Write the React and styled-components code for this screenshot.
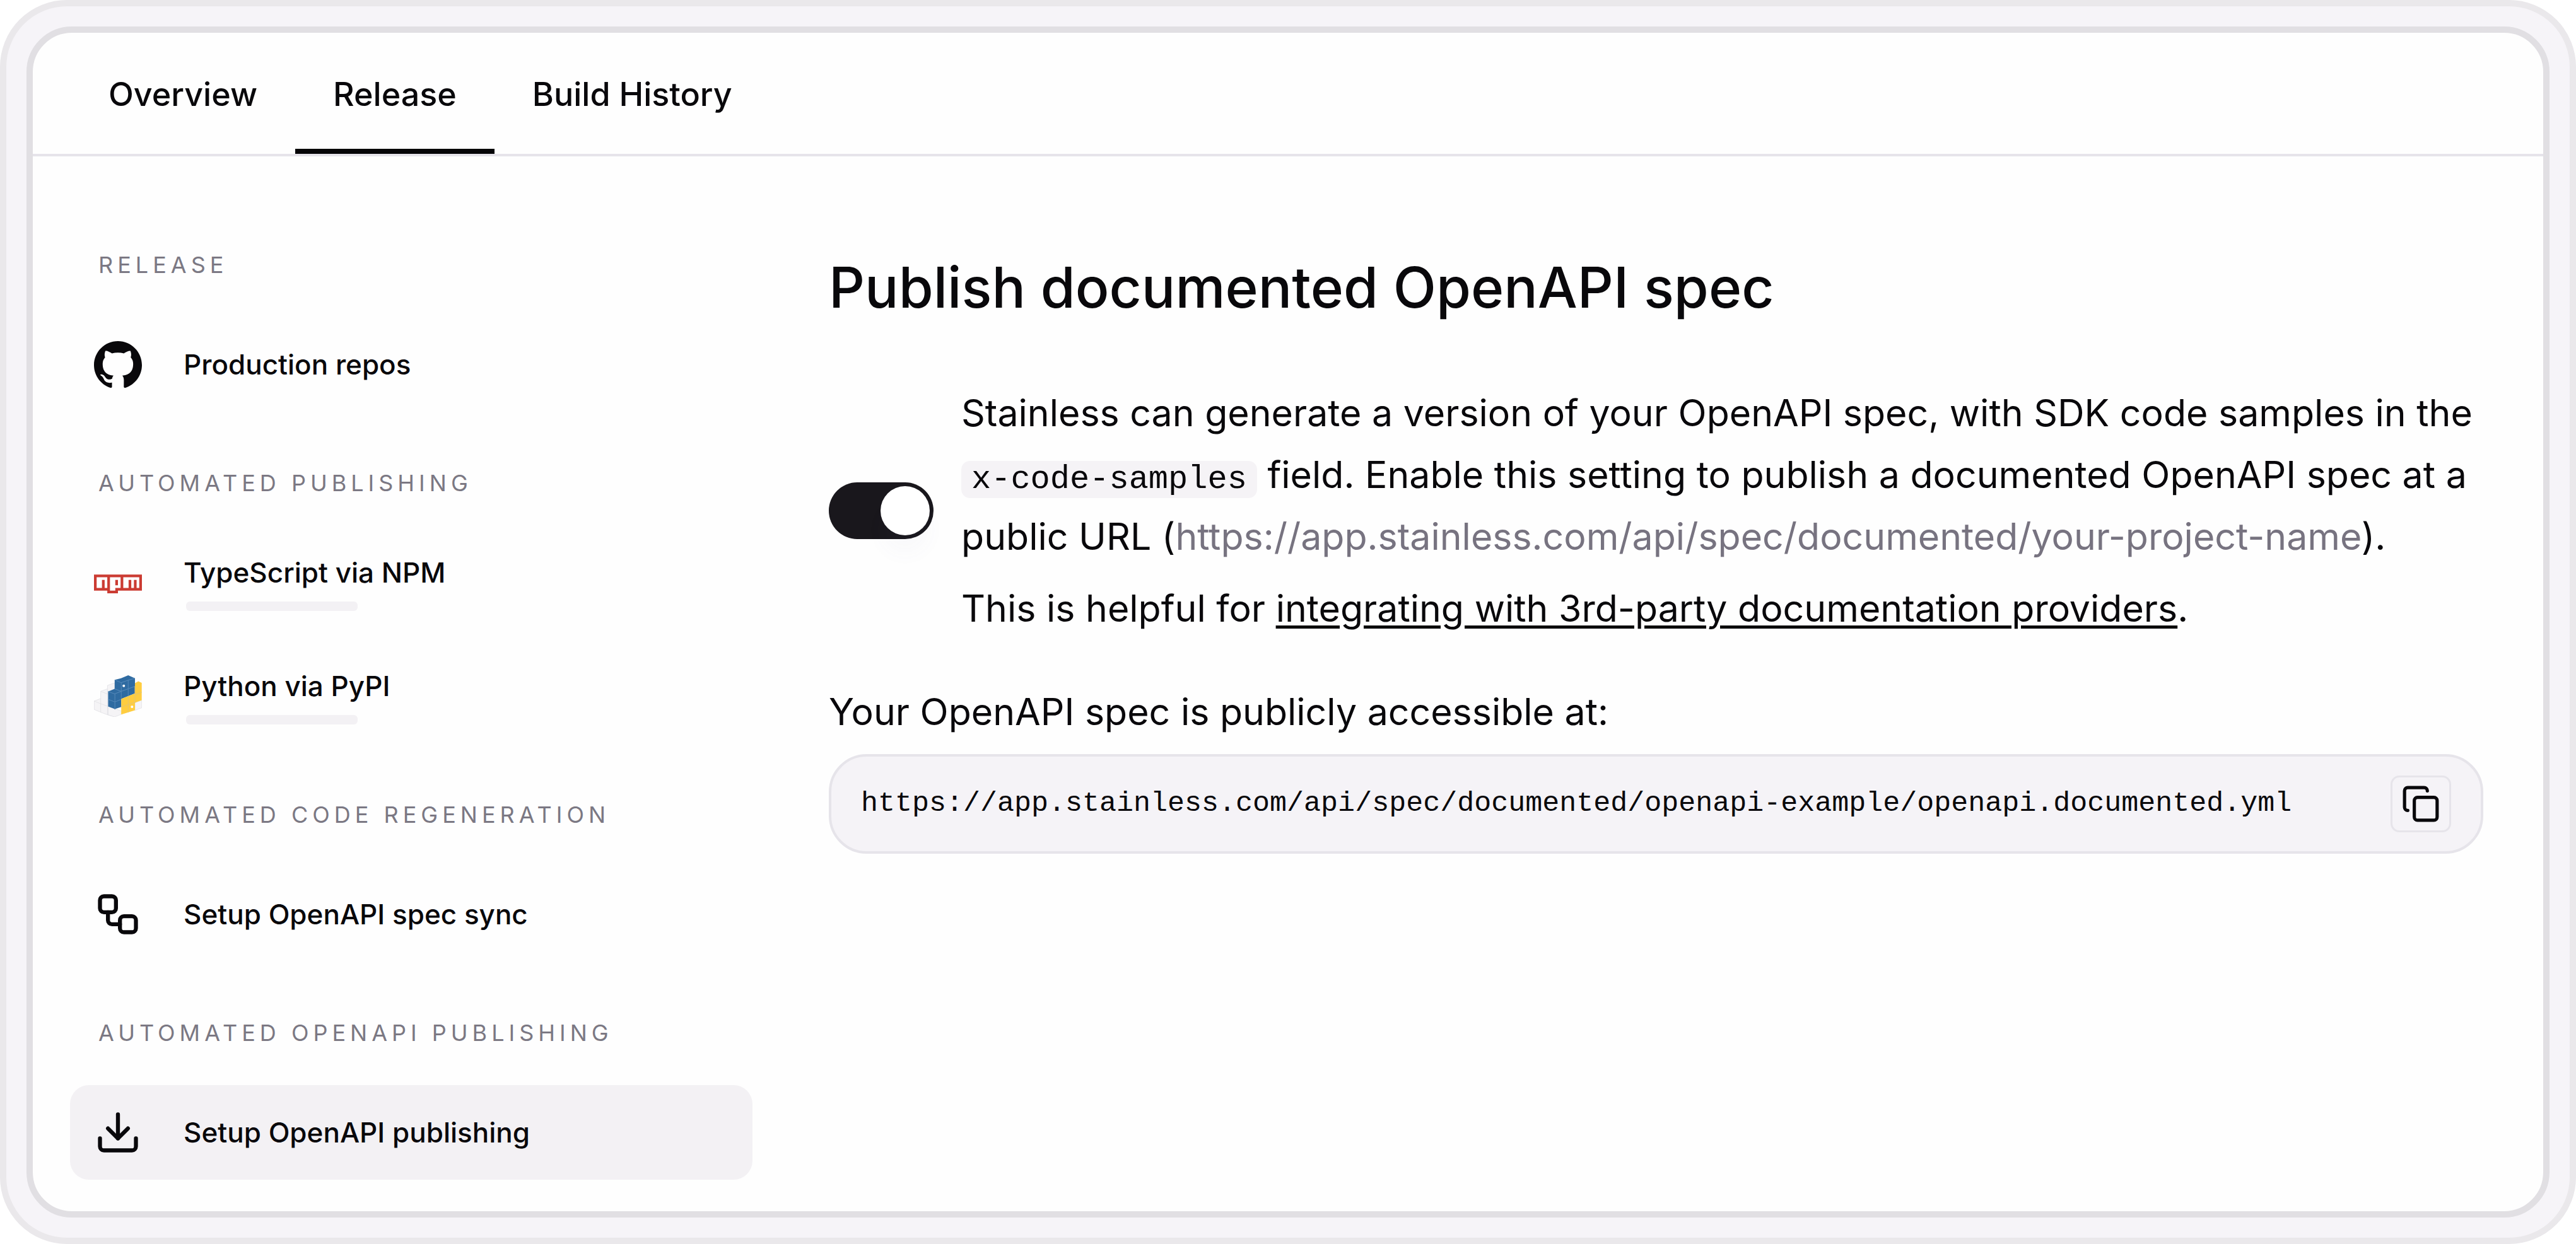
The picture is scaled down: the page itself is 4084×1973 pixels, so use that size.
import React, { useState } from "react";
import styled, { createGlobalStyle } from "styled-components";
import { Copy, Download, Workflow } from "lucide-react";
import { SiGithub } from "react-icons/si";
import { FaNpm } from "react-icons/fa";

const TABS = ["Overview", "Release", "Build History"];

const GROUPS = [
    {
        title: "Release",
        items: [{ label: "Production repos", icon: <SiGithub size={76} /> }],
    },
    {
        title: "Automated publishing",
        items: [
            { label: "TypeScript via NPM", icon: <FaNpm size={76} color="#cb3b32" />, loading: true },
            { label: "Python via PyPI", icon: <PypiLogo />, loading: true },
        ],
    },
    {
        title: "Automated code regeneration",
        items: [{ label: "Setup OpenAPI spec sync", icon: <Workflow size={76} /> }],
    },
    {
        title: "Automated OpenAPI publishing",
        items: [{ label: "Setup OpenAPI publishing", icon: <Download size={76} />, active: true }],
    },
];

const SPEC_URL = "https://app.stainless.com/api/spec/documented/openapi-example/openapi.documented.yml";

export default function App() {
    const [tab, setTab] = useState("Release");
    const [enabled, setEnabled] = useState(true);

    return (
        <>
            <GlobalStyle />
            <Frame>
                <Panel>
                    <TabBar aria-label="Project">
                        {TABS.map((name) => (
                            <Tab key={name} type="button" $active={name === tab} onClick={() => setTab(name)}>
                                {name}
                            </Tab>
                        ))}
                    </TabBar>

                    <Body>
                        <Sidebar aria-label="Release settings">
                            {GROUPS.map((group) => (
                                <Group key={group.title}>
                                    <GroupTitle>{group.title}</GroupTitle>
                                    <Items>
                                        {group.items.map((item) => (
                                            <Item key={item.label} href="#" $active={item.active}>
                                                <ItemIcon aria-hidden="true">{item.icon}</ItemIcon>
                                                <ItemText>
                                                    {item.label}
                                                    {item.loading && <Skeleton />}
                                                </ItemText>
                                            </Item>
                                        ))}
                                    </Items>
                                </Group>
                            ))}
                        </Sidebar>

                        <Main>
                            <Title>Publish documented OpenAPI spec</Title>

                            <Setting>
                                <Toggle
                                    type="checkbox"
                                    role="switch"
                                    id="publish-spec"
                                    checked={enabled}
                                    onChange={(e) => setEnabled(e.target.checked)}
                                />
                                <Description htmlFor="publish-spec">
                                    <Line>
                                        Stainless can generate a version of your OpenAPI spec, with SDK code samples in the{" "}
                                        <Code>x-code-samples</Code> field. Enable this setting to publish a documented
                                        OpenAPI spec at a public URL (
                                        <Muted>https://app.stainless.com/api/spec/documented/your-project-name</Muted>).
                                    </Line>
                                    <Line>
                                        This is helpful for{" "}
                                        <DocLink href="#">integrating with 3rd-party documentation providers</DocLink>.
                                    </Line>
                                </Description>
                            </Setting>

                            <Note>Your OpenAPI spec is publicly accessible at:</Note>
                            <UrlBox>
                                <Url>{SPEC_URL}</Url>
                                <CopyButton type="button" aria-label="Copy URL">
                                    <Copy size={62} />
                                </CopyButton>
                            </UrlBox>
                        </Main>
                    </Body>
                </Panel>
            </Frame>
        </>
    );
}

function PypiLogo() {
    return (
        <svg width="76" height="66" viewBox="0 0 225 197">
            <g fill="#f5f4f6" stroke="#dddce1" strokeWidth="2">
                <path d="M0 122l31-12V76l32-12V48l34-12v160l-34-9-32-12-31-13z" />
                <path d="M66 147l62 22v16l-32 12-30-10z" />
                <path d="M193 130l32-12v36l-32 12z" />
                <path d="M0 122l31 13 35 12M31 110v65M31 76l35 14M63 64v123" fill="none" />
            </g>
            <path fill="#2f6ba1" d="M66 77l31-13V22l30-8 34-14 32 14v72l-65 26v38l-30 10-32-12z" />
            <path fill="#ffcd3f" d="M193 37l16-9 16 8v82l-32 12v36l-65 20v-74l65-26z" />
            <path
                d="M66 77l31 11 31-12M66 114l32 12 30-12M98 88v74M97 22l31 13 33-12 32-9M128 35v74M161 23v76M128 76l65-24M97 64l31 12"
                fill="none"
                stroke="#5588b8"
                strokeWidth="3"
            />
            <path
                d="M193 52v34M193 92l32-12M161 100v76M128 149l65-21M193 86v44"
                fill="none"
                stroke="#e3c473"
                strokeWidth="3"
            />
            <circle cx="140" cy="50" r="6" fill="#fff" />
            <circle cx="179" cy="149" r="6" fill="#fff" />
        </svg>
    );
}

const GlobalStyle = createGlobalStyle`
    * { box-sizing: border-box; }
    body {
        margin: 0;
        background: #fff;
        color: #09080b;
        font-family: Inter, "Liberation Sans", sans-serif;
    }
`;

const Frame = styled.div`
    display: flex;
    min-height: 100vh;
    padding: 32px;
    background: #f6f4f8;
    border: 10px solid #eae8eb;
    border-radius: 106px;
`;
const Panel = styled.div`
    flex: 1;
    min-width: 0;
    background: #fefefe;
    border: 10px solid #e1dfe3;
    border-radius: 72px;
`;

const TabBar = styled.nav`
    display: flex;
    height: 196px;
    padding-left: 60px;
    border-bottom: 4px solid #e6e4ea;
`;
const Tab = styled.button`
    padding: 12px 60px 0;
    border: 0;
    border-bottom: 8px solid ${({ $active }) => ($active ? "#050407" : "transparent")};
    background: none;
    color: inherit;
    font: 500 52px/60px Inter, sans-serif;
    cursor: pointer;
`;

const Body = styled.div`
    display: flex;
    gap: 121px;
    padding: 152px 95px 50px 59px;
`;

const Sidebar = styled.nav`
    display: flex;
    flex-direction: column;
    flex: 0 0 1082px;
    gap: 93px;
`;
const Group = styled.section``;
const GroupTitle = styled.h2`
    margin: 0 0 63px 45px;
    color: #7b7883;
    font-size: 36px;
    font-weight: 400;
    line-height: 40px;
    letter-spacing: 7px;
    text-transform: uppercase;
`;
const Items = styled.div`
    display: flex;
    flex-direction: column;
    gap: 30px;
`;
const Item = styled.a`
    display: flex;
    align-items: center;
    gap: 66px;
    height: 150px;
    padding: 0 38px;
    border-radius: 30px;
    background: ${({ $active }) => ($active ? "#f3f1f4" : "transparent")};
    color: inherit;
    font-size: 44px;
    font-weight: 500;
    line-height: 56px;
    text-decoration: none;
`;
const ItemIcon = styled.span`
    display: flex;
    align-items: center;
    flex: 0 0 76px;
`;
const ItemText = styled.span`
    display: flex;
    flex-direction: column;
    gap: 18px;
`;
const Skeleton = styled.span`
    width: 272px;
    height: 15px;
    margin-left: 4px;
    border-radius: 6px;
    background: #f3f1f4;
`;

const Main = styled.main`
    flex: 1;
    min-width: 0;
`;
const Title = styled.h1`
    margin: 0 0 94px;
    font-size: 89px;
    font-weight: 500;
    line-height: 112px;
`;
const Setting = styled.div`
    display: flex;
    align-items: center;
    gap: 44px;
`;
const Toggle = styled.input`
    display: flex;
    flex: 0 0 166px;
    height: 90px;
    margin: 0;
    padding: 6px;
    appearance: none;
    border-radius: 45px;
    background: ${({ checked }) => (checked ? "#19171c" : "#d5d3d9")};
    justify-content: ${({ checked }) => (checked ? "flex-end" : "flex-start")};
    cursor: pointer;

    &::before {
        content: "";
        width: 78px;
        height: 78px;
        border-radius: 50%;
        background: #fff;
        box-shadow: 0 30px 30px rgba(110, 80, 160, 0.03);
    }
`;
const Description = styled.label`
    display: flex;
    flex-direction: column;
    flex: 1;
    gap: 16px;
`;
const Line = styled.span`
    font-size: 59px;
    line-height: 98px;
`;
const Code = styled.code`
    padding: 0 16px;
    border-radius: 14px;
    background: #f5f3f6;
    font-family: "Liberation Mono", monospace;
    font-size: 52px;
    line-height: 60px;
`;
const Muted = styled.span`
    color: #777380;
`;
const DocLink = styled.a`
    color: inherit;
    text-decoration-thickness: 5px;
    text-underline-offset: 6px;
`;

const Note = styled.p`
    margin: 66px 0 18px;
    font-size: 59px;
    line-height: 98px;
`;
const UrlBox = styled.div`
    display: flex;
    align-items: center;
    justify-content: space-between;
    height: 158px;
    padding: 0 47px;
    border: 4px solid #e6e4ea;
    border-radius: 60px;
    background: #f5f3f7;
`;
const Url = styled.code`
    font-family: "Liberation Mono", monospace;
    font-size: 45px;
    line-height: 60px;
`;
const CopyButton = styled.button`
    display: flex;
    align-items: center;
    justify-content: center;
    width: 96px;
    height: 90px;
    padding: 0;
    border: 3px solid #e6e4ea;
    border-radius: 14px;
    background: none;
    color: inherit;
    cursor: pointer;
`;
